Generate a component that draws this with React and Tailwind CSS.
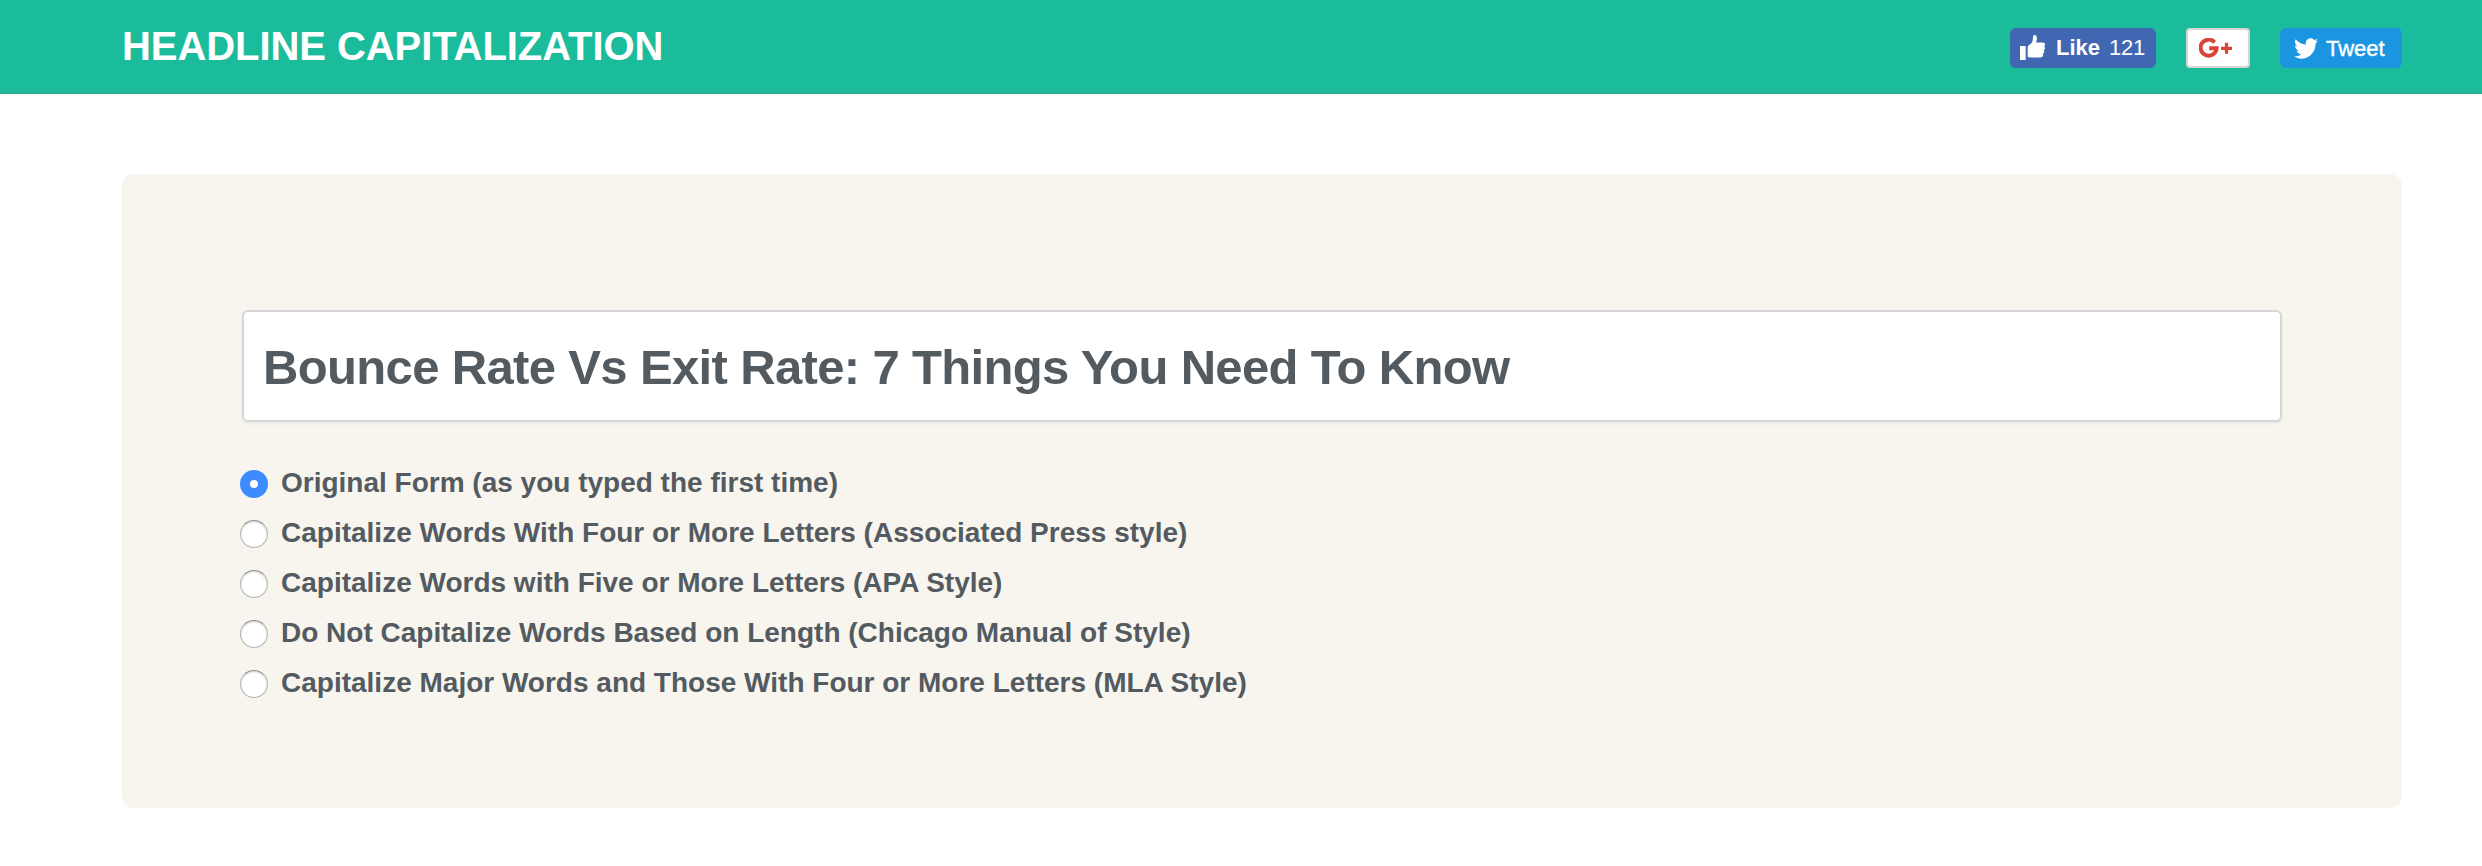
import { useState } from "react";
import { FaTwitter } from "react-icons/fa";

const STYLES = [
  { id: "original", label: "Original Form (as you typed the first time)" },
  { id: "ap", label: "Capitalize Words With Four or More Letters (Associated Press style)" },
  { id: "apa", label: "Capitalize Words with Five or More Letters (APA Style)" },
  { id: "chicago", label: "Do Not Capitalize Words Based on Length (Chicago Manual of Style)" },
  { id: "mla", label: "Capitalize Major Words and Those With Four or More Letters (MLA Style)" },
];

export default function App() {
  const [headline, setHeadline] = useState("Bounce Rate Vs Exit Rate: 7 Things You Need To Know");
  const [style, setStyle] = useState("original");

  return (
    <div className="min-h-screen bg-white font-['Liberation_Sans',Arial,sans-serif] text-[#535b61]">
      <header className="flex h-[94px] items-start justify-between border-b-2 border-[#2aae92] bg-[#1abc9c] pr-20 pl-[122px]">
        <h1 className="mt-[23px] text-[40px] leading-[46px] font-bold tracking-[-0.07px] text-white">
          HEADLINE CAPITALIZATION
        </h1>
        <div className="mt-7 flex gap-[30px]">
          <LikeButton count={121} />
          <button className="flex h-10 w-16 items-center rounded-[4px] border-2 border-[#d5d5d5] bg-white pl-[11px]">
            <GooglePlusIcon />
          </button>
          <button className="flex h-10 w-[122px] items-center rounded-md bg-[#1b95e0] pl-[14px] text-[22px] text-white">
            <FaTwitter className="h-[25px] w-6" preserveAspectRatio="none" />
            <span className="ml-2 pt-px leading-none [-webkit-text-stroke:0.4px_white]">Tweet</span>
          </button>
        </div>
      </header>

      <main className="mt-20 mr-20 ml-[122px] h-[634px] rounded-xl bg-[#f8f5ee] px-[120px] pt-[136px]">
        <input
          className="block h-28 w-full rounded-md border-2 border-[#d4d6d7] bg-white px-[19px] pt-0.5 text-[49px] font-bold tracking-[-0.65px] shadow-[0_2px_3px_rgba(0,0,0,0.05)] outline-none"
          value={headline}
          onChange={(e) => setHeadline(e.target.value)}
        />
        <div className="mt-9 -ml-0.5">
          {STYLES.map((s) => (
            <StyleOption key={s.id} label={s.label} checked={style === s.id} onSelect={() => setStyle(s.id)} />
          ))}
        </div>
      </main>
    </div>
  );
}

function LikeButton({ count }) {
  return (
    <button className="flex h-10 w-[146px] items-center rounded-md bg-[#4267b2] pl-[10px] text-[22px] leading-none text-white">
      <svg className="mb-px h-[25px] w-[25px]" viewBox="0 0 25 25" fill="currentColor">
        <path d="M.3 11h5q.4 0 .4.4v13.200q0 .4-.4.4H.3q-.3 0-.3-.4V11.400q0-.4.3-.4z" />
        <path d="M7.700 12.200c0-1 .5-1.500 1.400-2.200 1.800-1.400 3.300-3 3.600-4.600.3-1.500 0-3 .5-4.100.3-.8.8-1.300 1.500-1.300 1.400 0 2.200 1.400 2.200 3.400 0 1.600-.5 2.900-.9 4.100h6.500c1.500 0 2.500.7 2.500 1.900 0 .9-.4 1.500-1 1.900.7.400 1 1 1 1.700 0 1-.5 1.800-1.300 2.100.4.400.5.900.5 1.500 0 1-.6 1.700-1.400 2 .2.300.3.700.3 1.100 0 1.700-1.100 2.700-2.800 2.700H9c-.9 0-1.300-.4-1.300-1.200z" />
      </svg>
      <span className="ml-[11px] font-bold">Like</span>
      <span className="ml-[9px] tracking-[-0.3px]">{count}</span>
    </button>
  );
}

function GooglePlusIcon() {
  return (
    <svg className="h-5 w-[34px]" viewBox="0 0 34 20" fill="none" stroke="#db4437">
      <path d="M15.600 4.300A8 8 0 1 0 17.600 10.300H10.200" strokeWidth="4" />
      <path d="M22 10.300h11M27.500 4.800v11" strokeWidth="3.200" />
    </svg>
  );
}

function StyleOption({ label, checked, onSelect }) {
  return (
    <label className="flex h-[50px] items-start pt-3">
      <input
        type="radio"
        name="style"
        className="h-7 w-7 shrink-0 appearance-none rounded-full border border-[#b4b4b3] border-t-[#909192] bg-white shadow-[inset_0_1px_2px_rgba(0,0,0,0.2)] checked:border-[10px] checked:border-[#3d8bff] checked:shadow-none"
        checked={checked}
        onChange={onSelect}
      />
      <span className="-mt-[3px] ml-[13px] text-[28px] leading-8 font-bold">{label}</span>
    </label>
  );
}
